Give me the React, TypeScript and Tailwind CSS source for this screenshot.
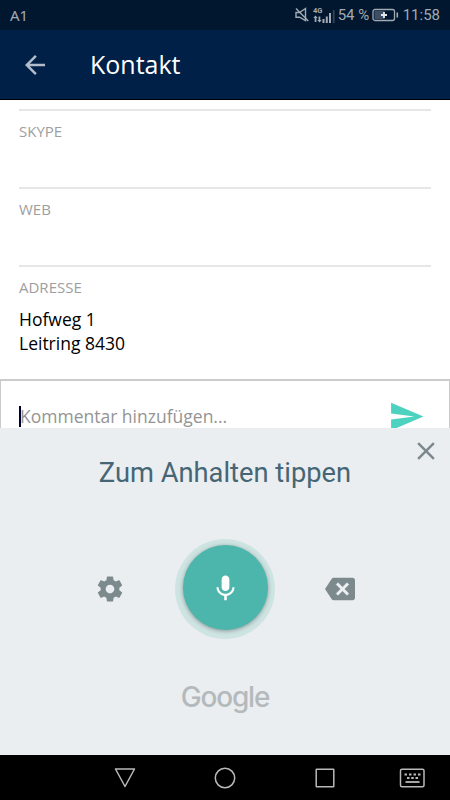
import type { ReactNode } from 'react'

const fields = [
  { label: 'SKYPE', lines: [] },
  { label: 'WEB', lines: [] },
  { label: 'ADRESSE', lines: ['Hofweg 1', 'Leitring 8430'] },
]

type IconProps = { className: string; children: ReactNode }

function Icon({ className, children }: IconProps) {
  return (
    <svg viewBox="0 0 24 24" fill="currentColor" className={`block shrink-0 ${className}`} aria-hidden="true">
      {children}
    </svg>
  )
}

function StatusBar() {
  return (
    <div className="flex h-[30px] items-center justify-between bg-[#00172f] px-[10px] font-['Roboto',sans-serif] text-[15px] text-[#a3aab3]">
      <span className="font-['Noto_Sans',sans-serif] text-[15px] leading-[28px]">A1</span>
      <div className="flex items-center">
        <svg width="14" height="16" viewBox="0 0 14 16" fill="none" stroke="currentColor" strokeWidth="1.4" aria-hidden="true">
          <path d="M1 5.5h3.5L10.500 1.500v12L4.500 10.200H1z" />
          <path d="M1 1.500L13.300 14" />
        </svg>
        <svg width="23" height="18" viewBox="0 0 23 18" fill="currentColor" className="mt-[-2px] ml-[4px]" aria-hidden="true">
          <text x="0" y="8" fontSize="7.500" fontWeight="700" fontFamily="Roboto, sans-serif">4G</text>
          <path d="M2.500 10.500l2.200 2.500H3.400V17H1.700v-4H.3zM6.500 17.500l-2.200-2.500h1.300v-3.500h1.700V15h1.400z" />
          <path d="M9.500 14h2v4h-2zM12.800 11.500h2V18h-2zM16 8h2v10h-2z" />
          <path d="M19.800 5h1.800v13h-1.800z" opacity=".3" />
        </svg>
        <span className="ml-[2px] w-[31px] text-[15px] whitespace-nowrap">54 %</span>
        <svg width="27" height="14" viewBox="0 0 27 14" fill="none" stroke="currentColor" className="ml-[3px]" aria-hidden="true">
          <rect x="1" y="1.500" width="21.500" height="11" rx="2" strokeWidth="1.300" />
          <rect x="2.500" y="3" width="10" height="8" fill="#3e4f64" stroke="none" />
          <path d="M25.300 4.500v5" strokeWidth="1.600" />
          <path d="M12 4v6M9 7h6" stroke="#e5e8eb" strokeWidth="1.800" />
        </svg>
        <span className="ml-[4px] text-[15px] leading-[30px]">11:58</span>
      </div>
    </div>
  )
}

function AppBar() {
  return (
    <header className="flex h-[70px] items-start border-b border-black bg-[#002048] pt-[17px] pl-[20px]">
      <Icon className="mt-[3px] h-[30px] w-[30px] text-[#b3bccb]">
        <path d="M20 11H7.830l5.590-5.590L12 4l-8 8 8 8 1.410-1.410L7.830 13H20v-2z" />
      </Icon>
      <h1 className="ml-[40px] text-[25px] leading-[34px] text-white">Kontakt</h1>
    </header>
  )
}

function Contact() {
  return (
    <main className="h-[279px] px-[19px] pt-[9px]">
      {fields.map((field) => (
        <section key={field.label} className="h-[78px] border-t-2 border-[#e6e6e6] pt-[9px]">
          <h2 className="text-[15px] leading-[22px] text-[#9e9e9e]">{field.label}</h2>
          <div className="mt-[9px] text-[17.5px] leading-[24px] text-black">
            {field.lines.map((line) => (
              <p key={line}>{line}</p>
            ))}
          </div>
        </section>
      ))}
    </main>
  )
}

function CommentBox() {
  return (
    <div className="flex h-[49px] items-start justify-between overflow-hidden border-x border-t-2 border-[#cbcbcb] pl-[18px]">
      <div className="mt-[24px] flex items-start">
        <span className="mt-px h-[21px] w-[2px] bg-[#00002d]" />
        <span className="-ml-px text-[17.5px] leading-[22px] whitespace-nowrap text-[#949494]">Kommentar hinzufügen...</span>
      </div>
      <Icon className="mt-[17px] mr-[24px] h-[37px] w-[37px] text-[#4ed2c0]">
        <path d="M2.010 21L23 12 2.010 3 2 10l15 2-15 2z" />
      </Icon>
    </div>
  )
}

function VoicePanel() {
  return (
    <section className="relative flex h-[327px] flex-col items-center bg-[#eaeef1] text-[#7c898d]">
      <button type="button" aria-label="Schließen" className="absolute top-[8px] right-[9px]">
        <Icon className="h-[30px] w-[30px]">
          <path d="M19 6.410L17.590 5 12 10.590 6.410 5 5 6.410 10.590 12 5 17.590 6.410 19 12 13.410 17.590 19 19 17.590 13.410 12z" />
        </Icon>
      </button>
      <h2 className="mt-[28px] font-['Roboto',sans-serif] text-[27.3px] leading-[34px] whitespace-nowrap text-[#466675]">
        Zum Anhalten tippen
      </h2>
      <div className="mt-[49px] flex h-[100px] w-[260px] items-center justify-between">
        <button type="button" aria-label="Einstellungen">
          <Icon className="h-[30px] w-[30px]">
            <path d="M19.430 12.980c.04-.32.07-.64.07-.98s-.03-.66-.07-.98l2.110-1.650c.19-.15.24-.42.12-.64l-2-3.460c-.12-.22-.39-.3-.61-.22l-2.490 1c-.52-.4-1.080-.73-1.690-.98l-.38-2.650C14.460 2.180 14.250 2 14 2h-4c-.25 0-.46.18-.49.42l-.38 2.650c-.61.25-1.170.59-1.690.98l-2.490-1c-.23-.09-.49 0-.61.22l-2 3.460c-.13.22-.07.49.12.64l2.110 1.650c-.04.32-.07.65-.07.98s.03.66.07.98l-2.110 1.650c-.19.15-.24.42-.12.64l2 3.460c.12.22.39.3.61.22l2.490-1c.52.4 1.080.73 1.690.98l.38 2.650c.03.24.24.42.49.42h4c.25 0 .46-.18.49-.42l.38-2.650c.61-.25 1.170-.59 1.690-.98l2.490 1c.23.09.49 0 .61-.22l2-3.460c.12-.22.07-.49-.12-.64l-2.110-1.650zM12 15.500c-1.930 0-3.500-1.570-3.500-3.500s1.570-3.500 3.500-3.500 3.500 1.570 3.500 3.500-1.570 3.500-3.500 3.500z" />
          </Icon>
        </button>
        <div className="flex h-[100px] w-[100px] justify-center rounded-full bg-[#cee4e3] pt-[6px]">
          <button
            type="button"
            aria-label="Aufnahme"
            className="flex h-[85px] w-[85px] items-center justify-center rounded-full bg-[#4db6ac] pt-[2px] text-white shadow-[0_1px_4px_rgba(0,0,0,0.35)]"
          >
            <Icon className="h-[31px] w-[31px]">
              <path d="M12 14c1.660 0 2.990-1.340 2.990-3L15 5c0-1.660-1.340-3-3-3S9 3.340 9 5v6c0 1.660 1.340 3 3 3zm5.300-3c0 3-2.540 5.100-5.300 5.100S6.700 14 6.700 11H5c0 3.410 2.720 6.230 6 6.720V21h2v-3.280c3.280-.48 6-3.300 6-6.720h-1.700z" />
            </Icon>
          </button>
        </div>
        <button type="button" aria-label="Löschen">
          <Icon className="h-[30px] w-[30px]">
            <path d="M22 3H7c-.69 0-1.230.35-1.590.88L0 12l5.410 8.110c.36.53.9.89 1.590.89h15c1.100 0 2-.9 2-2V5c0-1.100-.9-2-2-2z" />
            <path
              d="M19 15.590L17.590 17 14 13.410 10.410 17 9 15.590 12.590 12 9 8.410 10.410 7 14 10.590 17.590 7 19 8.410 15.410 12z"
              fill="#eef1f3"
              stroke="#eef1f3"
              strokeWidth=".5"
            />
          </Icon>
        </button>
      </div>
      <p className="mt-[40px] font-['Inter',sans-serif] text-[28px] leading-[36px] font-medium tracking-[-1.2px] text-[#b4babc]">Google</p>
    </section>
  )
}

function NavBar() {
  return (
    <nav className="flex h-[45px] items-center bg-black pl-[113px] text-[#b9b9b9]">
      <svg width="24" height="24" viewBox="0 0 24 24" fill="none" stroke="currentColor" strokeWidth="1.5" strokeLinejoin="round" aria-hidden="true">
        <path d="M2.500 3h19L12 20.500z" />
      </svg>
      <svg width="24" height="24" viewBox="0 0 24 24" fill="none" stroke="currentColor" strokeWidth="1.5" className="ml-[76px]" aria-hidden="true">
        <circle cx="12" cy="12" r="9.700" />
      </svg>
      <svg width="24" height="24" viewBox="0 0 24 24" fill="none" stroke="currentColor" strokeWidth="1.5" className="ml-[76px]" aria-hidden="true">
        <rect x="3.200" y="3.200" width="17.600" height="17.600" rx=".5" />
      </svg>
      <svg width="26" height="24" viewBox="0 0 26 24" fill="none" stroke="currentColor" strokeWidth="1.5" className="ml-[62px]" aria-hidden="true">
        <rect x="1.500" y="3.200" width="23.500" height="17.600" rx="1.500" />
        <path d="M5.500 8.500h16" strokeWidth="2" strokeDasharray="2.500 2" />
        <path d="M8 12h11" strokeWidth="2" strokeDasharray="2.500 1.750" />
        <path d="M6.500 16h14" strokeWidth="1.8" />
      </svg>
    </nav>
  )
}

export default function App() {
  return (
    <div className="h-[800px] w-[450px] overflow-hidden bg-white font-['Open_Sans',sans-serif]">
      <StatusBar />
      <AppBar />
      <Contact />
      <CommentBox />
      <VoicePanel />
      <NavBar />
    </div>
  )
}
